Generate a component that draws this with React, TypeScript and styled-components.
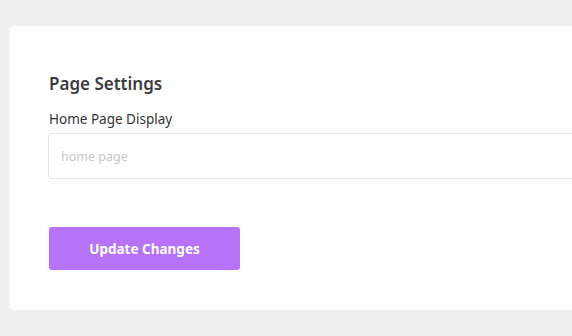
import styled, { createGlobalStyle } from 'styled-components'

const GlobalStyle = createGlobalStyle`
  html, body {
    margin: 0;
    padding: 0;
    background: #f1ecf2;
    overflow: hidden;
  }
  body {
    font-family: "Noto Sans", "Open Sans", sans-serif;
  }
`

const Page = styled.div`
  padding: 26px 0 0 9px;
  width: 700px;
`

const Card = styled.section`
  background: #ffffff;
  border-radius: 5px;
  padding: 46px 40px 40px 40px;
`

const Title = styled.h2`
  margin: 0 0 13px 0;
  font-size: 17px;
  line-height: 24px;
  font-weight: 600;
  color: #3b3b40;
`

const Label = styled.label`
  display: block;
  font-size: 13.5px;
  line-height: 20px;
  color: #333338;
  margin-bottom: 4px;
`

const TextInput = styled.input`
  box-sizing: border-box;
  display: block;
  width: 100%;
  height: 46px;
  margin-left: -1px;
  padding: 0 12px;
  border: 1px solid #e8e8ea;
  border-radius: 3px;
  font-family: inherit;
  font-size: 12.5px;
  color: #333;
  outline: none;

  &::placeholder {
    color: #c6c6ca;
  }
`

const Button = styled.button`
  display: block;
  margin-top: 48px;
  width: 191px;
  height: 43px;
  border: none;
  border-radius: 3px;
  background: #b672f9;
  color: #ffffff;
  font-family: inherit;
  font-size: 13.5px;
  font-weight: 700;
  cursor: pointer;
`

export default function App() {
  return (
    <>
      <GlobalStyle />
      <Page>
        <Card>
          <Title>Page Settings</Title>
          <Label htmlFor="home-display">Home Page Display</Label>
          <TextInput id="home-display" placeholder="home page" />
          <Button type="button">Update Changes</Button>
        </Card>
      </Page>
    </>
  )
}
